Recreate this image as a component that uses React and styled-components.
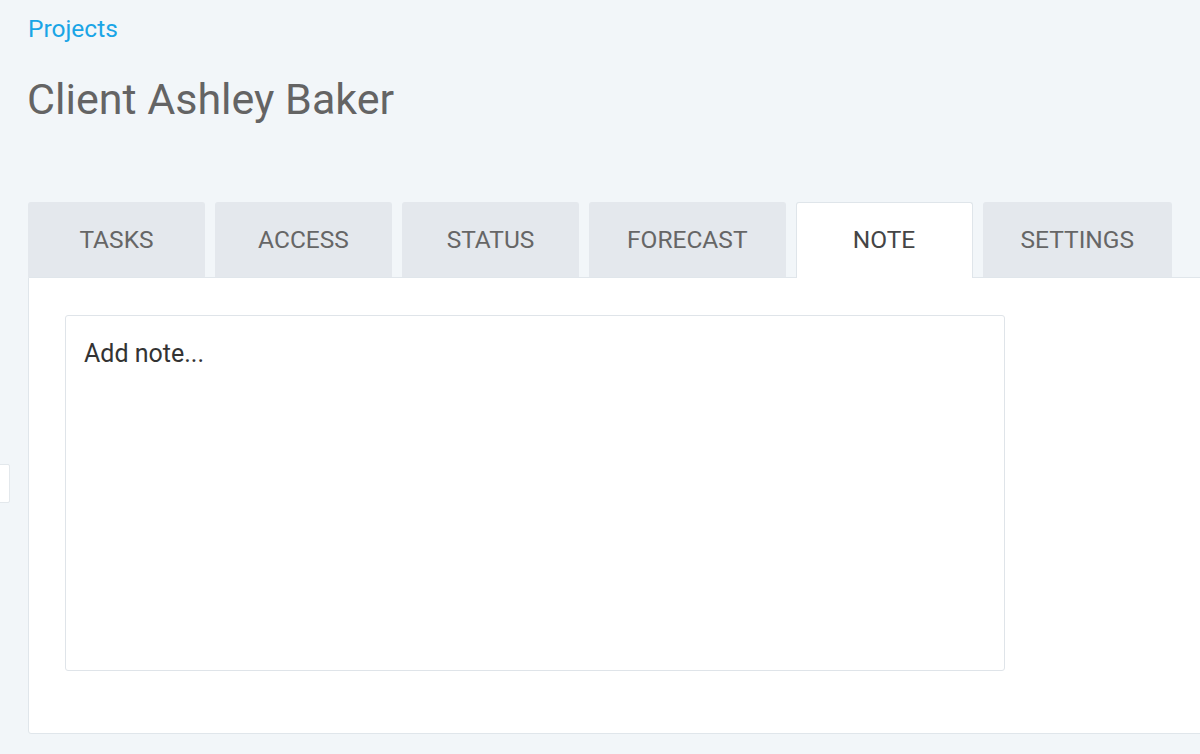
import React, { useState } from 'react';
import styled, { createGlobalStyle } from 'styled-components';

const GlobalStyle = createGlobalStyle`
  html, body {
    margin: 0;
    padding: 0;
    background: #f2f6f9;
    font-family: Roboto, "Liberation Sans", sans-serif;
    overflow: hidden;
  }
`

const Page = styled.div`
  box-sizing: border-box;
  width: 100%;
  height: 754px;
  padding: 14px 0 0 28px;
  position: relative;
`

const Crumb = styled.a`
  display: inline-block;
  font-size: 24.5px;
  line-height: 30px;
  color: #1aa5e6;
  text-decoration: none;
  cursor: pointer;
`

const Title = styled.h1`
  margin: 27px 0 0 -1px;
  font-size: 43px;
  font-weight: 400;
  line-height: 56px;
  color: #646464;
`

const TabBar = styled.div`
  display: flex;
  gap: 10px;
  margin-top: 75px;
  height: 75px;
  align-items: flex-end;
`

const Tab = styled.button`
  box-sizing: border-box;
  min-width: 177px;
  height: ${props => props.$active ? '76px' : '75px'};
  padding: 0 37px 2px;
  margin-bottom: ${props => props.$active ? '-1px' : '0'};
  border: 1px solid ${props => props.$active ? '#dfe5ea' : '#e4e8ed'};
  border-bottom: none;
  border-radius: 3px 3px 0 0;
  background: ${props => props.$active ? '#ffffff' : '#e4e8ed'};
  color: ${props => props.$active ? '#454545' : '#666666'};
  font-family: Roboto, "Liberation Sans", sans-serif;
  font-size: 24.5px;
  text-transform: uppercase;
  cursor: pointer;
  position: relative;
  z-index: ${props => props.$active ? 2 : 1};
  &:focus {
    outline: none;
  }
`

const Panel = styled.div`
  box-sizing: border-box;
  width: calc(100% + 10px);
  height: 457px;
  background: #ffffff;
  border: 1px solid #e0e6eb;
  border-radius: 0 0 3px 3px;
  padding: 37px 0 0 36px;
  position: relative;
  z-index: 1;
`

const NoteArea = styled.textarea`
  box-sizing: border-box;
  display: block;
  width: 940px;
  height: 356px;
  border: 1px solid #dfe4e9;
  border-radius: 3px;
  padding: 23px 18px;
  resize: none;
  font-family: Roboto, "Liberation Sans", sans-serif;
  font-size: 25px;
  line-height: 30px;
  color: #333;
  &::placeholder {
    color: #333;
  }
  &:focus {
    outline: none;
  }
`

const EdgeHandle = styled.div`
  position: absolute;
  left: -2px;
  top: 464px;
  width: 10px;
  height: 37px;
  background: #ffffff;
  border: 1px solid #e3e8ec;
  border-radius: 2px;
`

const tabs = ['Tasks', 'Access', 'Status', 'Forecast', 'Note', 'Settings']

export default function App() {
  const [active, setActive] = useState('Note')
  const [note, setNote] = useState('')

  return (
    <Page>
      <GlobalStyle />
      <Crumb>Projects</Crumb>
      <Title>Client Ashley Baker</Title>
      <TabBar>
        {tabs.map(t => (
          <Tab key={t} $active={t === active} onClick={() => setActive(t)}>{t}</Tab>
        ))}
      </TabBar>
      <Panel>
        <NoteArea placeholder="Add note..." value={note} onChange={e => setNote(e.target.value)} />
      </Panel>
      <EdgeHandle />
    </Page>
  )
}
